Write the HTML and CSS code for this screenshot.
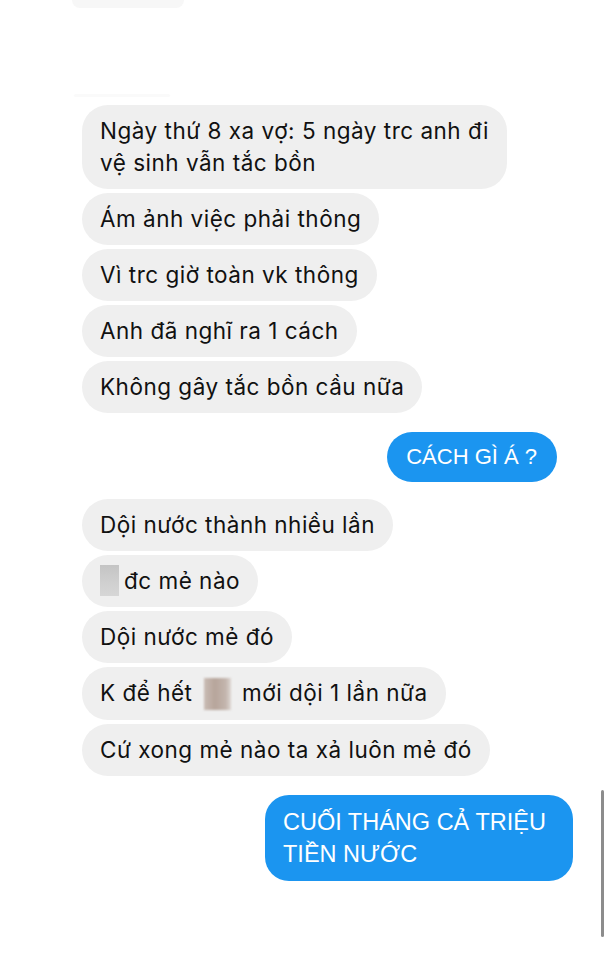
FILE: index.html
```html
<!DOCTYPE html>
<html lang="vi">
<head>
<meta charset="utf-8">
<title>Chat</title>
<link rel="stylesheet" href="styles.css">
</head>
<body>
<div class="screen">
  <div class="ghost-top"></div>
  <div class="ghost-line"></div>
  <div class="thread">
    <div class="group in">
      <div class="bubble gray">Ngày thứ 8 xa vợ: 5 ngày trc anh đi<br>vệ sinh vẫn tắc bồn</div>
      <div class="bubble gray">Ám ảnh việc phải thông</div>
      <div class="bubble gray">Vì trc giờ toàn vk thông</div>
      <div class="bubble gray">Anh đã nghĩ ra 1 cách</div>
      <div class="bubble gray">Không gây tắc bồn cầu nữa</div>
    </div>
    <div class="group out">
      <div class="bubble blue b1">CÁCH GÌ Á ?</div>
    </div>
    <div class="group in">
      <div class="bubble gray">Dội nước thành nhiều lần</div>
      <div class="bubble gray"><span class="blur blur-gray"></span>đc mẻ nào</div>
      <div class="bubble gray">Dội nước mẻ đó</div>
      <div class="bubble gray">K để hết <span class="blur blur-brown"></span> mới dội 1 lần nữa</div>
      <div class="bubble gray">Cứ xong mẻ nào ta xả luôn mẻ đó</div>
    </div>
    <div class="group out">
      <div class="bubble blue b2">CUỐI THÁNG CẢ TRIỆU<br>TIỀN NƯỚC</div>
    </div>
  </div>
  <div class="scroll-indicator"></div>
</div>
</body>
</html>
```

FILE: styles.css
```css
html, body {
  margin: 0;
  padding: 0;
  background: #ffffff;
}

.screen {
  position: relative;
  width: 608px;
  height: 960px;
  overflow: hidden;
  background: #ffffff;
}

.ghost-top {
  width: 112px;
  height: 8px;
  margin-left: 72px;
  background: #f7f7f7;
  border-radius: 0 0 8px 8px;
}

.ghost-line {
  width: 96px;
  height: 3px;
  margin: 86px 0 0 74px;
  background: #fafafa;
  border-radius: 2px;
}

.thread {
  display: flex;
  flex-direction: column;
  margin-top: 8px;
}

.group {
  display: flex;
  flex-direction: column;
  gap: 4px;
}

.group.in {
  align-items: flex-start;
  padding-left: 82px;
}

.group.out {
  align-items: flex-end;
  margin-top: 19px;
  margin-bottom: 17px;
}

.bubble {
  font-family: "Inter", "Noto Sans", sans-serif;
  font-size: 22.5px;
  letter-spacing: 0.5px;
  line-height: 32px;
  padding: 10px 18px;
  border-radius: 26px;
  color: #111111;
  white-space: nowrap;
}

.bubble.gray {
  background: #efefef;
}

.bubble.blue {
  background: #1b95f0;
  color: #ffffff;
  font-family: "Liberation Sans", "Noto Sans", sans-serif;
  font-size: 22px;
  letter-spacing: 0;
  border-radius: 26px;
}

.b1 {
  margin-right: 51px;
  padding: 9px 20px 9px 19px;
}

.bubble.b2 {
  margin-right: 35px;
  width: 308px;
  box-sizing: border-box;
  padding: 11px 18px;
  border-radius: 24px;
  font-size: 23.5px;
}

.blur {
  display: inline-block;
  vertical-align: -7px;
}

.blur-gray {
  width: 19px;
  height: 31px;
  margin-right: 5px;
  background: linear-gradient(#c4c4c4, #cfcfcf 55%, #d6d6d6);
}

.blur-brown {
  width: 27px;
  height: 32px;
  margin: 0 4px 0 5px;
  vertical-align: -9px;
  background: linear-gradient(90deg, #c9bcb5, #b7a59b 40%, #c3b5ad 80%, #ddd6d2);
  filter: blur(1px);
}

.scroll-indicator {
  position: absolute;
  left: 601px;
  top: 790px;
  width: 3px;
  height: 147px;
  border-radius: 2px;
  background: #8c8c8c;
}
```
